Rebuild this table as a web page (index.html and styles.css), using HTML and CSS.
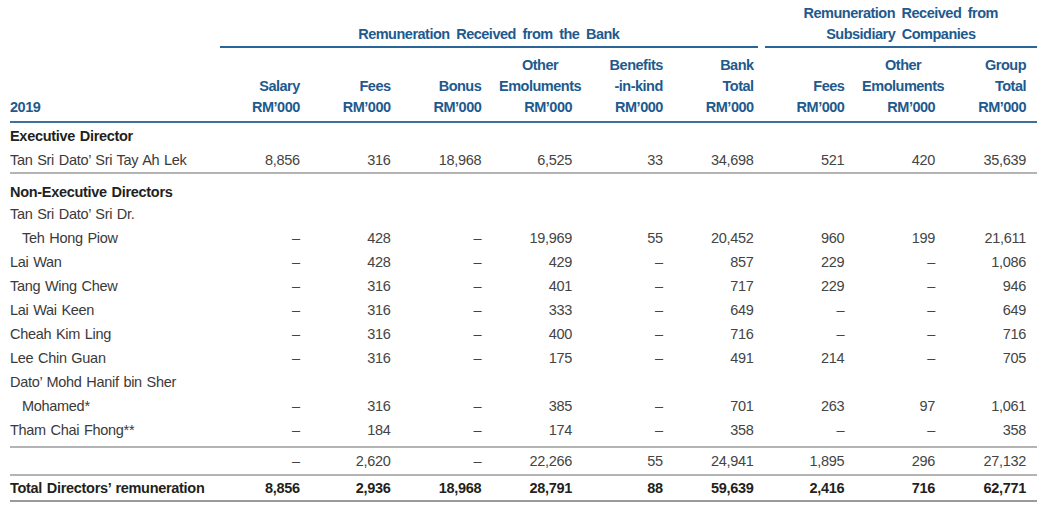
FILE: index.html
```html
<!DOCTYPE html>
<html lang="en">
<head>
<meta charset="utf-8">
<title>Directors' Remuneration 2019</title>
<link rel="stylesheet" href="styles.css">
</head>
<body>
<table class="rem">
  <colgroup>
    <col class="c-name">
    <col><col><col><col><col><col><col><col><col>
  </colgroup>
  <thead>
    <tr class="grp-row">
      <th></th>
      <th colspan="6" class="grp"><div class="grp-line bank">Remuneration Received from the Bank</div></th>
      <th colspan="3" class="grp"><div class="grp-line sub">Remuneration Received from<br>Subsidiary Companies</div></th>
    </tr>
    <tr class="col-row">
      <th class="year">2019</th>
      <th>Salary<br>RM’000</th>
      <th>Fees<br>RM’000</th>
      <th>Bonus<br>RM’000</th>
      <th><span class="ctr">Other<br>Emoluments</span><br>RM’000</th>
      <th>Benefits<br>-in-kind<br>RM’000</th>
      <th>Bank<br>Total<br>RM’000</th>
      <th>Fees<br>RM’000</th>
      <th><span class="ctr">Other<br>Emoluments</span><br>RM’000</th>
      <th>Group<br>Total<br>RM’000</th>
    </tr>
  </thead>
  <tbody>
    <tr class="sec first"><td colspan="10">Executive Director</td></tr>
    <tr class="line-below">
      <td>Tan Sri Dato’ Sri Tay Ah Lek</td>
      <td>8,856</td><td>316</td><td>18,968</td><td>6,525</td><td>33</td><td>34,698</td><td>521</td><td>420</td><td>35,639</td>
    </tr>
    <tr class="sec after-line"><td colspan="10">Non-Executive Directors</td></tr>
    <tr><td colspan="10">Tan Sri Dato’ Sri Dr.</td></tr>
    <tr>
      <td class="ind">Teh Hong Piow</td>
      <td>–</td><td>428</td><td>–</td><td>19,969</td><td>55</td><td>20,452</td><td>960</td><td>199</td><td>21,611</td>
    </tr>
    <tr>
      <td>Lai Wan</td>
      <td>–</td><td>428</td><td>–</td><td>429</td><td>–</td><td>857</td><td>229</td><td>–</td><td>1,086</td>
    </tr>
    <tr>
      <td>Tang Wing Chew</td>
      <td>–</td><td>316</td><td>–</td><td>401</td><td>–</td><td>717</td><td>229</td><td>–</td><td>946</td>
    </tr>
    <tr>
      <td>Lai Wai Keen</td>
      <td>–</td><td>316</td><td>–</td><td>333</td><td>–</td><td>649</td><td>–</td><td>–</td><td>649</td>
    </tr>
    <tr>
      <td>Cheah Kim Ling</td>
      <td>–</td><td>316</td><td>–</td><td>400</td><td>–</td><td>716</td><td>–</td><td>–</td><td>716</td>
    </tr>
    <tr>
      <td>Lee Chin Guan</td>
      <td>–</td><td>316</td><td>–</td><td>175</td><td>–</td><td>491</td><td>214</td><td>–</td><td>705</td>
    </tr>
    <tr><td colspan="10">Dato’ Mohd Hanif bin Sher</td></tr>
    <tr>
      <td class="ind">Mohamed*</td>
      <td>–</td><td>316</td><td>–</td><td>385</td><td>–</td><td>701</td><td>263</td><td>97</td><td>1,061</td>
    </tr>
    <tr class="last-nonexec">
      <td>Tham Chai Fhong**</td>
      <td>–</td><td>184</td><td>–</td><td>174</td><td>–</td><td>358</td><td>–</td><td>–</td><td>358</td>
    </tr>
    <tr class="subtotal">
      <td></td>
      <td>–</td><td>2,620</td><td>–</td><td>22,266</td><td>55</td><td>24,941</td><td>1,895</td><td>296</td><td>27,132</td>
    </tr>
    <tr class="total">
      <td>Total Directors’ remuneration</td>
      <td>8,856</td><td>2,936</td><td>18,968</td><td>28,791</td><td>88</td><td>59,639</td><td>2,416</td><td>716</td><td>62,771</td>
    </tr>
  </tbody>
</table>
</body>
</html>
```

FILE: styles.css
```css
html, body {
  margin: 0;
  padding: 0;
  background: #ffffff;
}

body {
  font-family: "Liberation Sans", Arial, sans-serif;
  font-size: 14.5px;
  color: #3e3e3e;
}

.rem {
  margin-left: 10px;
  width: 1027px;
  border-collapse: collapse;
  table-layout: fixed;
  word-spacing: 1px;
  letter-spacing: -0.3px;
}

.c-name {
  width: 210px;
}

.rem th {
  font-weight: bold;
  color: #1e5a8e;
  text-align: right;
  vertical-align: bottom;
  padding: 0 11px 0 0;
  line-height: 21px;
  letter-spacing: -0.5px;
  word-spacing: 1px;
}

.grp-row th {
  height: 48px;
  padding: 0;
}

.rem th.grp {
  text-align: center;
  padding: 0;
}

.grp-line {
  border-bottom: 2px solid #2a659a;
  padding-bottom: 1px;
  word-spacing: 3px;
}

.grp-line.bank {
  margin-right: 7px;
}

.col-row th {
  height: 70px;
  padding-bottom: 3px;
  border-bottom: 2px solid #41709d;
}

.col-row th.year {
  text-align: left;
}

.ctr {
  display: inline-block;
  text-align: center;
  margin-right: -9px;
}

.rem td {
  text-align: right;
  padding: 0 11px 0 0;
  height: 24px;
  line-height: 24px;
  white-space: nowrap;
  color: #444444;
}

.rem td:first-child {
  text-align: left;
  padding-right: 0;
  color: #3a3a3a;
}

.rem td.ind {
  padding-left: 12px;
}

.sec td {
  font-weight: bold;
  color: #231f20 !important;
}

.sec.first td {
  padding-top: 1px;
}

.line-below td {
  border-bottom: 2px solid #b4b4b4;
}

.sec.after-line td {
  padding-top: 9px;
  height: 19px;
  line-height: 19px;
}

.last-nonexec td {
  padding-bottom: 4px;
  border-bottom: 2px solid #b4b4b4;
}

.subtotal td {
  height: 26px;
  line-height: 26px;
  border-bottom: 2px solid #b4b4b4;
}

.total td {
  font-weight: bold;
  color: #231f20 !important;
  border-bottom: 2px solid #9a9a9a;
}
```
